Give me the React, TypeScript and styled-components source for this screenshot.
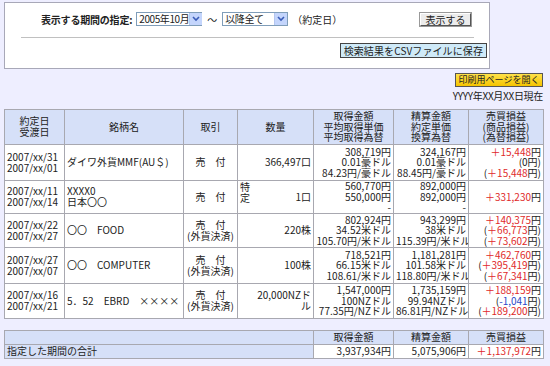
import React from 'react'
import styled, { createGlobalStyle } from 'styled-components'

const GlobalStyle = createGlobalStyle`
	html, body {
		margin: 0;
		padding: 0;
		background: #eeeeff;
	}
	body {
		font-family: 'Noto Sans CJK JP', 'DejaVu Sans', sans-serif;
		font-size: 10px;
		color: #222;
	}
`

const Page = styled.div`
	width: 550px;
	height: 366px;
	padding: 2px 7px 0 4px;
	box-sizing: border-box;
	overflow: hidden;
`

const FilterPanel = styled.div`
	width: 486px;
	height: 67px;
	box-sizing: border-box;
	border: 1px solid #a8a8b8;
	background: #fff;
	padding: 8px 16px 0 16px;
`

const FilterRow = styled.div`
	display: flex;
	align-items: center;
	height: 16px;
	padding-left: 20px;
	white-space: nowrap;
`

const Label = styled.span`
	font-weight: bold;
	margin-right: 4px;
	letter-spacing: -0.2px;
`

const FakeSelect = styled.div<{ $w: number }>`
	display: flex;
	align-items: center;
	justify-content: space-between;
	width: ${(p) => p.$w}px;
	height: 14px;
	box-sizing: border-box;
	border: 1px solid #7f9db9;
	background: #fff;
	padding-left: 2px;
	line-height: 12px;
	white-space: nowrap;
	letter-spacing: -0.4px;
`

const SelectArrow = styled.span`
	display: flex;
	align-items: center;
	justify-content: center;
	flex: none;
	width: 12px;
	height: 12px;
	background: #c4d5fc;
	border-left: 1px solid #b4c6f0;
`

const Tilde = styled.span`
	margin: 0 5px;
`

const Note = styled.span`
	margin-left: 4px;
`

const Spacer = styled.div`
	flex: 1;
`

const GrayButton = styled.div`
	width: 51px;
	height: 13px;
	box-sizing: border-box;
	border: 1px solid;
	border-color: #fff #555 #555 #fff;
	outline: 1px solid #999;
	background: #ececec;
	text-align: center;
	line-height: 11px;
	margin-right: 2px;
`

const Divider = styled.div`
	height: 1px;
	background: #c0c0c0;
	margin: 10px 0 0 0;
	width: 453px;
`

const SaveRow = styled.div`
	display: flex;
	justify-content: flex-end;
	margin: 5px -14px 0 0;
`

const CsvButton = styled.div`
	height: 15px;
	box-sizing: border-box;
	padding: 0 3px;
	border: 1px solid #444;
	background: #cfeaf8;
	line-height: 13px;
	letter-spacing: 0.1px;
`

const PrintRow = styled.div`
	display: flex;
	justify-content: flex-end;
	margin-top: 4px;
`

const PrintButton = styled.div`
	width: 88px;
	height: 14px;
	box-sizing: border-box;
	border: 1px solid #555;
	background: linear-gradient(#ffe24a, #f5c400);
	text-align: center;
	font-size: 9px;
	line-height: 12px;
	white-space: nowrap;
`

const AsOf = styled.div`
	text-align: right;
	margin-top: 3px;
	height: 12px;
	line-height: 12px;
	letter-spacing: -0.3px;
`

const Table = styled.table<{ $top: number }>`
	border-collapse: collapse;
	width: 539px;
	margin-top: ${(p) => p.$top}px;
	table-layout: fixed;
	border: 1px solid #999;
`

const HeadRow = styled.tr<{ $h: number }>`
	height: ${(p) => p.$h}px;
`

const Th = styled.th`
	box-sizing: border-box;
	background: #d6e0f8;
	border: 1px solid #a8a8b0;
	font-weight: normal;
	line-height: 10.6px;
	padding: 0 1px;
	text-align: center;
	white-space: nowrap;
`

const Td = styled.td<{ $align?: string; $label?: boolean }>`
	box-sizing: border-box;
	background: ${(p) => (p.$label ? '#d6e0f8' : '#fff')};
	border: 1px solid #a8a8b0;
	line-height: 10.6px;
	padding: 0 2px;
	text-align: ${(p) => p.$align || 'right'};
	vertical-align: middle;
	white-space: nowrap;
	overflow: hidden;
`

const DataRow = styled.tr<{ $h: number }>`
	height: ${(p) => p.$h}px;
`

const QtyCell = styled.div`
	display: flex;
	justify-content: space-between;
	align-items: center;
	height: 32px;
`

const Tokutei = styled.span`
	align-self: flex-start;
	width: 10px;
	white-space: normal;
	line-height: 10.6px;
	text-align: left;
	padding-top: 1px;
`

const Red = styled.span`
	color: #e02a2a;
`

const Blue = styled.span`
	color: #2a48c8;
`

const Arrow = () => (
	<svg width="8" height="6" viewBox="0 0 8 6">
		<path d="M1 1 L4 4 L7 1" fill="none" stroke="#3a5cb8" strokeWidth="1.6" />
	</svg>
)

type Row = {
	dates: [string, string]
	name: React.ReactNode
	trade: React.ReactNode
	qty: React.ReactNode
	cost: React.ReactNode
	settle: React.ReactNode
	pl: React.ReactNode
	h: number
}

const fx = (
	<>
		売　付<br />(外貨決済)
	</>
)

const rows: Row[] = [
	{
		dates: ['2007/xx/31', '2007/xx/01'],
		name: 'ダイワ外貨MMF(AU＄)',
		trade: '売　付',
		qty: '366,497口',
		cost: (
			<>
				308,719円<br />0.01豪ドル<br />84.23円/豪ドル
			</>
		),
		settle: (
			<>
				324,167円<br />0.01豪ドル<br />88.45円/豪ドル
			</>
		),
		pl: (
			<>
				<Red>＋15,448</Red>円<br />(0円)<br />(<Red>＋15,448</Red>円)
			</>
		),
		h: 36,
	},
	{
		dates: ['2007/xx/11', '2007/xx/14'],
		name: (
			<>
				XXXX0<br />日本〇〇
			</>
		),
		trade: '売　付',
		qty: (
			<QtyCell>
				<Tokutei>特定</Tokutei>
				<span>1口</span>
			</QtyCell>
		),
		cost: (
			<>
				560,770円<br />550,000円<br />-
			</>
		),
		settle: (
			<>
				892,000円<br />892,000円<br />-
			</>
		),
		pl: (
			<>
				<Red>＋331,230</Red>円
			</>
		),
		h: 33,
	},
	{
		dates: ['2007/xx/22', '2007/xx/27'],
		name: '〇〇　FOOD',
		trade: fx,
		qty: '220株',
		cost: (
			<>
				802,924円<br />34.52米ドル<br />105.70円/米ドル
			</>
		),
		settle: (
			<>
				943,299円<br />38米ドル<br />115.39円/米ドル
			</>
		),
		pl: (
			<>
				<Red>＋140,375</Red>円<br />(<Red>＋66,773</Red>円)<br />(<Red>＋73,602</Red>円)
			</>
		),
		h: 34,
	},
	{
		dates: ['2007/xx/27', '2007/xx/07'],
		name: '〇〇　COMPUTER',
		trade: fx,
		qty: '100株',
		cost: (
			<>
				718,521円<br />66.15米ドル<br />108.61/米ドル
			</>
		),
		settle: (
			<>
				1,181,281円<br />101.58米ドル<br />118.80円/米ドル
			</>
		),
		pl: (
			<>
				<Red>＋462,760</Red>円<br />(<Red>＋395,419</Red>円)<br />(<Red>＋67,341</Red>円)
			</>
		),
		h: 36,
	},
	{
		dates: ['2007/xx/16', '2007/xx/21'],
		name: '5．52　EBRD　××××',
		trade: fx,
		qty: (
			<>
				20,000NZド<br />ル
			</>
		),
		cost: (
			<>
				1,547,000円<br />100NZドル<br />77.35円/NZドル
			</>
		),
		settle: (
			<>
				1,735,159円<br />99.94NZドル<br />86.81円/NZドル
			</>
		),
		pl: (
			<>
				<Red>＋188,159</Red>円<br />(<Blue>-1,041</Blue>円)<br />(<Red>＋189,200</Red>円)
			</>
		),
		h: 35,
	},
]

export default function App() {
	return (
		<Page>
			<GlobalStyle />
			<FilterPanel>
				<FilterRow>
					<Label>表示する期間の指定:</Label>
					<FakeSelect $w={66}>
						<span>2005年10月</span>
						<SelectArrow>
							<Arrow />
						</SelectArrow>
					</FakeSelect>
					<Tilde>～</Tilde>
					<FakeSelect $w={66}>
						<span>以降全て</span>
						<SelectArrow>
							<Arrow />
						</SelectArrow>
					</FakeSelect>
					<Note>（約定日）</Note>
					<Spacer />
					<GrayButton>表示する</GrayButton>
				</FilterRow>
				<Divider />
				<SaveRow>
					<CsvButton>検索結果をCSVファイルに保存</CsvButton>
				</SaveRow>
			</FilterPanel>
			<PrintRow>
				<PrintButton>印刷用ページを開く</PrintButton>
			</PrintRow>
			<AsOf>YYYY年XX月XX日現在</AsOf>

			<Table $top={7}>
				<colgroup>
					<col style={{ width: 60 }} />
					<col style={{ width: 119 }} />
					<col style={{ width: 54 }} />
					<col style={{ width: 76 }} />
					<col style={{ width: 80 }} />
					<col style={{ width: 75 }} />
					<col style={{ width: 75 }} />
				</colgroup>
				<thead>
					<HeadRow $h={35}>
						<Th>
							約定日
							<br />
							受渡日
						</Th>
						<Th>銘柄名</Th>
						<Th>取引</Th>
						<Th>数量</Th>
						<Th>
							取得金額
							<br />
							平均取得単価
							<br />
							平均取得為替
						</Th>
						<Th>
							精算金額
							<br />
							約定単価
							<br />
							換算為替
						</Th>
						<Th>
							売買損益
							<br />
							(商品損益)
							<br />
							(為替損益)
						</Th>
					</HeadRow>
				</thead>
				<tbody>
					{rows.map((r, i) => (
						<DataRow key={i} $h={r.h}>
							<Td $align="left">
								{r.dates[0]}
								<br />
								{r.dates[1]}
							</Td>
							<Td $align="left">{r.name}</Td>
							<Td $align="center">{r.trade}</Td>
							<Td>{r.qty}</Td>
							<Td>{r.cost}</Td>
							<Td>{r.settle}</Td>
							<Td>{r.pl}</Td>
						</DataRow>
					))}
				</tbody>
			</Table>

			<Table $top={11}>
				<colgroup>
					<col style={{ width: 309 }} />
					<col style={{ width: 80 }} />
					<col style={{ width: 75 }} />
					<col style={{ width: 75 }} />
				</colgroup>
				<thead>
					<HeadRow $h={14}>
						<Th>&nbsp;</Th>
						<Th>取得金額</Th>
						<Th>精算金額</Th>
						<Th>売買損益</Th>
					</HeadRow>
				</thead>
				<tbody>
					<DataRow $h={14}>
						<Td $align="left" $label>
							指定した期間の合計
						</Td>
						<Td>3,937,934円</Td>
						<Td>5,075,906円</Td>
						<Td>
							<Red>＋1,137,972</Red>円
						</Td>
					</DataRow>
				</tbody>
			</Table>
		</Page>
	)
}
